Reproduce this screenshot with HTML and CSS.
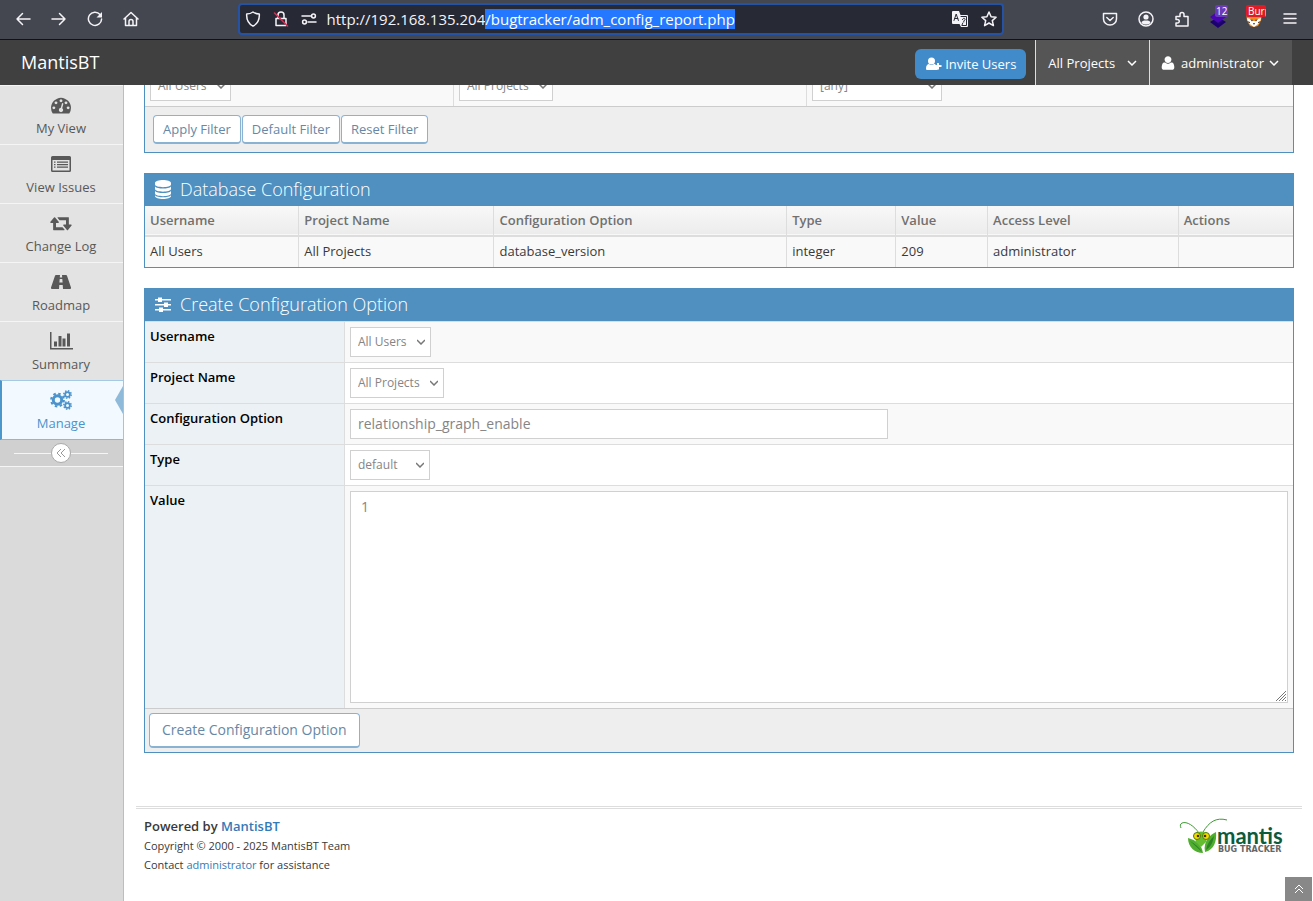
FILE: index.html
```html
<!DOCTYPE html>
<html lang="en">
<head>
    <meta charset="utf-8">
    <title>Configuration Report - MantisBT</title>
    <link rel="stylesheet" href="styles.css">
</head>
<body>
    <!-- Browser toolbar -->
    <div class="toolbar">
        <div class="toolbar-nav">
            <button class="tool" aria-label="Back"><svg width="16" height="16" viewBox="0 0 16 16"><path d="M15 8H2M7.500 2.500L2 8l5.500 5.500"/></svg></button>
            <button class="tool" aria-label="Forward"><svg width="16" height="16" viewBox="0 0 16 16"><path d="M1 8h13M8.500 2.500L14 8l-5.500 5.500"/></svg></button>
            <button class="tool" aria-label="Reload"><svg width="16" height="16" viewBox="0 0 16 16"><path d="M13 3.500A6.600 6.600 0 1 0 14.600 8"/><path class="solid" d="M15 1v5.500H9.500z"/></svg></button>
            <button class="tool" aria-label="Home"><svg width="16" height="16" viewBox="0 0 16 16"><path d="M1 8l7-6.500L15 8M2.500 7v7.500h11V7M6 14.500V10.500a2 2 0 0 1 4 0v4"/></svg></button>
        </div>
        <div class="urlbar">
            <svg width="16" height="16" viewBox="0 0 16 16"><path d="M8 1c2 1.500 4 2 6.300 2 .4 6-1.300 9.500-6.300 12.200C3 12.500 1.300 9 1.700 3 4 3 6 2.500 8 1z"/></svg>
            <svg width="16" height="16" viewBox="0 0 16 16"><path d="M3 7.500h10v7H3zM5 7.500V4a3 3 0 0 1 6 0v3.500"/><path class="strike" d="M1.500 2l13 13"/></svg>
            <svg width="16" height="16" viewBox="0 0 16 16"><path d="M1 5h9M7 11h8"/><circle cx="12.500" cy="5" r="1.900"/><circle cx="3.500" cy="11" r="1.900"/></svg>
            <input class="url" id="url" type="text" aria-label="Address" value="http://192.168.135.204/bugtracker/adm_config_report.php" spellcheck="false">
            <svg width="17" height="16" viewBox="0 0 17 16"><path class="solid" d="M1 0h6l1.500 4H15a1 1 0 0 1 1 1v10a1 1 0 0 1-1 1H9l-1.500-3H1a1 1 0 0 1-1-1V1a1 1 0 0 1 1-1z"/><path class="cut" d="M2 9.500L4.200 3l2.200 6.500M2.800 7.500h3M9 5.500h5.500v9H9.800l1-2.500M10.500 8.500c.5-2 3-1.500 2.500.2l-1.200 1.300v1"/></svg>
            <svg width="16" height="16" viewBox="0 0 16 16"><path d="M8 1l2.100 4.700 5 .5-3.800 3.400 1.100 5L8 12l-4.400 2.600 1.100-5L.9 6.200l5-.5z"/></svg>
        </div>
        <div class="toolbar-ext">
            <button class="tool" aria-label="Pocket"><svg width="16" height="16" viewBox="0 0 16 16"><path d="M1.500 2.500h13V8a6.500 6 0 0 1-13 0zM4.800 6.500L8 9.500l3.200-3"/></svg></button>
            <button class="tool" aria-label="Account"><svg width="16" height="16" viewBox="0 0 16 16"><circle cx="8" cy="8" r="7"/><circle class="solid" cx="8" cy="6" r="2.600"/><path class="solid" d="M3.500 12c0-2 2-2.500 4.500-2.500s4.500.5 4.500 2.500C10 14 6 14 3.500 12z"/></svg></button>
            <button class="tool" aria-label="Extensions"><svg width="16" height="16" viewBox="0 0 16 16"><path d="M2 5.500h4V3.500a2 2 0 0 1 4 0v2h4v9.500H2v-3h1.500a1.600 1.600 0 0 0 0-3.500H2z"/></svg></button>
            <button class="tool" aria-label="Layers"><svg width="18" height="18" viewBox="0 0 18 18"><path fill="#1d0070" d="M1 12l8-5 8 5-8 6z"/><path fill="#4806b4" d="M1 7l8-6 8 6-8 6z"/></svg><span class="count purple">12</span></button>
            <button class="tool" aria-label="Burp"><svg width="16" height="16" viewBox="0 0 16 16"><path fill="#f08a1c" d="M0 1l4 2h8l4-2-1 9-3 5-4 1-4-1-3-5z"/><path fill="#fff" d="M1 7l4 1 2 2h2l2-2 4-1-1 4-3 3-3 2-3-2-3-3z"/><path fill="#503018" d="M4 8l3 1-1 1.500zM12 8l-3 1 1 1.500zM7 12h2l-1 2zM1 10l3 1v1l-2-.5zM15 10l-3 1v1l2-.5z"/></svg><span class="count red">Burp</span></button>
            <button class="tool" aria-label="Menu"><svg width="14" height="16" viewBox="0 0 14 16"><path d="M1 3h12M1 7.500h12M1 12h12"/></svg></button>
        </div>
    </div>

    <!-- Navbar -->
    <header class="navbar">
        <a class="brand" href="#">MantisBT</a>
        <a class="invite" href="#"><svg width="16" height="14" viewBox="0 0 16 14"><circle cx="5.500" cy="4" r="3.500"/><path d="M0 11.500C0 8.500 1.500 7 3 7c1.500 1.200 3.500 1.200 5 0 1 0 1.500.5 2 1.200V10h1.500v3H1.500C.5 13 0 12.500 0 11.500zM11 6h2v2h2.500v2H13v2.500h-2V10H9V8h2z"/></svg>Invite Users</a>
        <a class="nav-item projects" href="#">All Projects<svg width="10" height="6" viewBox="0 0 10 6"><path d="M1 1l4 4 4-4"/></svg></a>
        <a class="nav-item account" href="#"><svg class="user" width="16" height="16" viewBox="0 0 1792 1792"><path d="M1600 1405q0 120-73 189.500t-194 69.500h-874q-121 0-194-69.500t-73-189.500q0-53 3.500-103.500t14-109 26.500-108.500 43-97.500 62-81 85.500-53.500 111.500-20q9 0 42 21.500t74.500 48 108 48 133.500 21.500 133.500-21.500 108-48 74.500-48 42-21.500q61 0 111.500 20t85.500 53.500 62 81 43 97.500 26.500 108.500 14 109 3.500 103.500zm-320-893q0 159-112.500 271.500t-271.500 112.500-271.500-112.500-112.500-271.500 112.500-271.500 271.500-112.500 271.500 112.500 112.500 271.500z"/></svg>administrator<svg width="10" height="6" viewBox="0 0 10 6"><path d="M1 1l4 4 4-4"/></svg></a>
    </header>

    <div class="main-container">
        <!-- Sidebar -->
        <nav class="sidebar">
            <ul class="nav-list">
                <li><a href="#"><svg width="20" height="20" viewBox="0 0 1792 1792"><path d="M384 1152q0-53-37.500-90.500t-90.500-37.500-90.500 37.500-37.500 90.500 37.500 90.500 90.500 37.500 90.500-37.500 37.500-90.500zm192-448q0-53-37.500-90.500t-90.500-37.500-90.500 37.500-37.500 90.500 37.500 90.500 90.500 37.500 90.500-37.500 37.500-90.500zm428 481l101-382q6-26-7.500-48.500t-38.500-29.500-48 6.500-30 39.500l-101 382q-60 5-107 43.500t-63 98.500q-20 77 20 146t117 89 146-20 89-117q16-60-6-117t-72-91zm660-33q0-53-37.500-90.500t-90.500-37.500-90.500 37.500-37.500 90.500 37.500 90.500 90.500 37.500 90.500-37.500 37.500-90.500zm-640-640q0-53-37.500-90.500t-90.500-37.500-90.500 37.500-37.500 90.500 37.500 90.500 90.500 37.500 90.500-37.500 37.500-90.500zm448 192q0-53-37.500-90.500t-90.500-37.500-90.500 37.500-37.500 90.500 37.500 90.500 90.500 37.500 90.500-37.500 37.500-90.500zm320 448q0 261-141 483-19 29-54 29h-1402q-35 0-54-29-141-221-141-483 0-182 71-348t191-286 286-191 348-71 348 71 286 191 191 286 71 348z"/></svg>My View</a></li>
                <li><a href="#"><svg width="20" height="20" viewBox="0 0 20 20"><path fill-rule="evenodd" d="M1.500 2h17A1.500 1.500 0 0 1 20 3.500v13a1.500 1.500 0 0 1-1.500 1.500h-17A1.500 1.500 0 0 1 0 16.500v-13A1.500 1.500 0 0 1 1.500 2zM1.500 6v10.500h17V6zM3 7.500h1.500v1.300H3zM6 7.500h11v1.300H6zM3 10h1.500v1.300H3zM6 10h11v1.300H6zM3 12.500h1.500v1.300H3zM6 12.500h11v1.300H6z"/></svg>View Issues</a></li>
                <li><a href="#"><svg width="22" height="20" viewBox="0 0 1920 1792"><path d="M1280 1504q0 13-9.500 22.500t-22.500 9.500h-960q-8 0-13.500-2t-9-7-5.500-8-3-11.500-1-11.500v-600h-192q-26 0-45-19t-19-45q0-24 15-41l320-384q19-22 49-22t49 22l320 384q15 17 15 41 0 26-19 45t-45 19h-192v384h576q16 0 25 11l160 192q7 10 7 21zm640-416q0 24-15 41l-320 384q-20 23-49 23t-49-23l-320-384q-15-17-15-41 0-26 19-45t45-19h192v-384h-576q-16 0-25-12l-160-192q-7-9-7-20 0-13 9.500-22.500t22.500-9.500h960q8 0 13.500 2t9 7 5.500 8 3 11.500 1 11.500v600h192q26 0 45 19t19 45z"/></svg>Change Log</a></li>
                <li><a href="#"><svg width="20" height="20" viewBox="0 0 20 20"><path fill-rule="evenodd" d="M5 3h4l-.2 2.500h2.400L11 3h4c.6 0 .8.200 1 .8l4 11.700c.3 1-.1 1.500-1 1.500h-7l-.3-4H8.300L8 17H1c-.9 0-1.300-.5-1-1.500L4 3.800c.2-.6.400-.8 1-.8zM8.700 7l-.3 3.500h3.200L11.300 7z"/></svg>Roadmap</a></li>
                <li><a href="#"><svg width="23" height="20" viewBox="0 0 23 20"><path d="M0 1h1.500v16H23v1.500H0zM4 10.500h3V15.500H4zM8.500 5h3v10.500h-3zM12.500 7.500h3v8h-3zM17 2.500h3v13h-3z"/></svg>Summary</a></li>
                <li class="active"><a href="#"><svg width="22" height="20" viewBox="0 0 22 20"><g class="gear"><circle cx="7.500" cy="10" r="4.200" stroke-width="3"/><circle cx="7.500" cy="10" r="6.400" stroke-width="2" stroke-dasharray="2.510 2.510"/><circle cx="17.500" cy="4.500" r="2.400" stroke-width="1.800"/><circle cx="17.500" cy="4.500" r="3.700" stroke-width="1.500" stroke-dasharray="1.450 1.450"/><circle cx="17.500" cy="15.500" r="2.400" stroke-width="1.800"/><circle cx="17.500" cy="15.500" r="3.700" stroke-width="1.500" stroke-dasharray="1.450 1.450"/></g></svg>Manage</a></li>
            </ul>
            <div class="sidebar-toggle">
                <button aria-label="Collapse sidebar"><svg width="10" height="10" viewBox="0 0 10 10"><path d="M5 1L1 5l4 4M9 1L5 5l4 4"/></svg></button>
            </div>
        </nav>

        <main class="content">
            <!-- Filter, scrolled under the navbar -->
            <form class="panel filter">
                <div class="filter-row">
                    <div class="filter-cell"><select class="w-user" aria-label="Username"><option>All Users</option></select></div>
                    <div class="filter-cell"><select class="w-project" aria-label="Project Name"><option>All Projects</option></select></div>
                    <div class="filter-cell"><select class="w-any" aria-label="Configuration Option"><option>[any]</option></select></div>
                </div>
                <div class="toolbox small">
                    <button type="button">Apply Filter</button>
                    <button type="button">Default Filter</button>
                    <button type="button">Reset Filter</button>
                </div>
            </form>

            <!-- Database configuration -->
            <section class="panel">
                <h4><svg width="18" height="20" viewBox="0 0 18 20"><path d="M1 4c0-4 16-4 16 0v1.500c0 3.500-16 3.500-16 0zM1 7.500c2 2.700 14 2.700 16 0V10c0 3.500-16 3.500-16 0zM1 12c2 2.700 14 2.700 16 0v2.500c0 3.500-16 3.500-16 0zM1 16.300c2 2.700 14 2.700 16 0v.7c0 4-16 4-16 0z"/></svg>Database Configuration</h4>
                <table class="config-table">
                    <thead>
                        <tr><th class="col-user">Username</th><th class="col-project">Project Name</th><th class="col-option">Configuration Option</th><th class="col-type">Type</th><th class="col-value">Value</th><th class="col-access">Access Level</th><th>Actions</th></tr>
                    </thead>
                    <tbody>
                        <tr><td>All Users</td><td>All Projects</td><td>database_version</td><td>integer</td><td>209</td><td>administrator</td><td></td></tr>
                    </tbody>
                </table>
            </section>

            <!-- Create option form -->
            <form class="panel">
                <h4><svg width="18" height="20" viewBox="0 0 18 20"><path d="M1 5h16v1.500H1zM1 10h16v1.500H1zM1 15h16v1.500H1zM4 3.500h4V8H4zM10 8.500h4V13h-4zM5 13.500h4V18H5z"/></svg>Create Configuration Option</h4>
                <div class="form-row">
                    <label for="username">Username</label>
                    <div class="field"><select class="w-user" id="username"><option>All Users</option></select></div>
                </div>
                <div class="form-row">
                    <label for="project">Project Name</label>
                    <div class="field"><select class="w-project" id="project"><option>All Projects</option></select></div>
                </div>
                <div class="form-row">
                    <label for="option">Configuration Option</label>
                    <div class="field"><input id="option" type="text" value="relationship_graph_enable"></div>
                </div>
                <div class="form-row">
                    <label for="type">Type</label>
                    <div class="field"><select class="w-type" id="type"><option>default</option></select></div>
                </div>
                <div class="form-row">
                    <label for="value">Value</label>
                    <div class="field"><textarea id="value">1</textarea></div>
                </div>
                <div class="toolbox">
                    <button type="button">Create Configuration Option</button>
                </div>
            </form>

            <footer class="footer">
                <div class="footer-text">
                    <p class="powered">Powered by <a href="#">MantisBT</a></p>
                    <p>Copyright &copy; 2000 - 2025 MantisBT Team</p>
                    <p>Contact <a href="#">administrator</a> for assistance</p>
                </div>
                <svg class="logo" width="106" height="40" viewBox="0 0 106 40" role="img" aria-label="Mantis Bug Tracker">
                    <path class="antenna" d="M21 16C16 9 9 4 4 6c-2 1-2 3-1 5M25 15C31 5 38 0 49 3"/>
                    <path fill="#4fae2e" d="M10 21c8 2 14 7 15 15-8 0-15-6-15-15zM38 15c-6 3-13 9-11 20 9-2 12-11 11-20z"/>
                    <path fill="#2c8425" d="M12 24c5 3 9 6 12 11M36 19c-4 4-7 8-8 14 5-3 7-8 8-14z"/>
                    <path fill="#65bd32" d="M16 17q7-5 14 0l-2 8-5 5-5-5z"/>
                    <circle fill="#f6d800" stroke="#4a7c10" cx="19" cy="19" r="3.500"/><circle fill="#f6d800" stroke="#4a7c10" cx="28" cy="19" r="3.500"/>
                    <circle fill="#403000" cx="20" cy="19" r="1.300"/><circle fill="#403000" cx="27" cy="19" r="1.300"/>
                    <text class="logo-name" x="39" y="27">mantis</text>
                    <text class="logo-sub" x="40" y="35">BUG TRACKER</text>
                </svg>
            </footer>
        </main>
    </div>

    <a class="scroll-up" href="#" aria-label="Scroll to top"><svg width="10" height="10" viewBox="0 0 10 10"><path d="M1 5l4-4 4 4M1 9l4-4 4 4"/></svg></a>

    <script>
        // Select the path part of the address
        const url = document.getElementById('url');
        url.focus();
        url.setSelectionRange(url.value.indexOf('/bugtracker'), url.value.length);
    </script>
</body>
</html>
```
FILE: styles.css
```css
* {
    box-sizing: border-box;
}

body {
    display: flex;
    flex-direction: column;
    height: 100vh;
    margin: 0;
    overflow: hidden;
    background-color: #fff;
    color: #393939;
    font-family: "Open Sans", sans-serif;
    font-size: 13px;
    line-height: 20px;
}

a {
    color: #337ab7;
    text-decoration: none;
}

svg {
    flex: none;
    fill: currentColor;
}

button, input, select, textarea {
    font-family: inherit;
}

/* Browser toolbar */
.toolbar {
    display: flex;
    align-items: center;
    justify-content: space-between;
    flex: none;
    height: 40px;
    padding: 0 15px 1px;
    background-color: #44474f;
    border-bottom: 1px solid #111218;
    color: #f4f4f8;
}

.toolbar svg {
    fill: none;
    stroke: currentColor;
    stroke-width: 1.5;
    stroke-linecap: round;
    stroke-linejoin: round;
}

.toolbar .solid {
    fill: currentColor;
    stroke: none;
}

.toolbar .strike {
    stroke: #e22850;
}

.toolbar .cut {
    stroke: #272935;
    stroke-width: 1;
}

.toolbar-nav, .toolbar-ext {
    display: flex;
    gap: 20px;
}

.tool {
    display: flex;
    position: relative;
    align-items: center;
    justify-content: center;
    width: 16px;
    height: 20px;
    padding: 0;
    background: none;
    border: none;
    color: inherit;
}

.tool svg path[fill] {
    stroke: none;
}

/* Counter over an extension icon */
.count {
    position: absolute;
    top: -4px;
    left: 5px;
    padding: 0 1px;
    border-radius: 2px;
    color: #fff;
    font-size: 10px;
    line-height: 12px;
}

.purple {
    background-color: #6a3ab8;
}

.red {
    left: 0;
    max-width: 20px;
    padding: 0 0 0 2px;
    overflow: hidden;
    background-color: #e01b24;
}

.urlbar {
    display: flex;
    align-items: center;
    flex: 0 1 766px;
    gap: 12px;
    height: 32px;
    padding: 0 5px;
    background-color: #272935;
    border: 2px solid #2552a4;
    border-radius: 4px;
}

.url {
    flex: 1;
    min-width: 0;
    height: 20px;
    margin-left: -2px;
    padding: 0;
    background: none;
    border: none;
    outline: none;
    color: #f4f4f8;
    font-size: 15px;
    line-height: 20px;
}

.url::selection {
    background-color: #2478ff;
    color: #fff;
}

/* Navbar */
.navbar {
    display: flex;
    align-items: center;
    flex: none;
    height: 45px;
    padding: 0 21px;
    background-color: #404040;
}

.navbar a {
    color: #fff;
}

.navbar .brand {
    margin-right: auto;
    padding-bottom: 1px;
    font-size: 18px;
}

.invite {
    display: flex;
    align-items: center;
    gap: 3px;
    height: 30px;
    margin: 3px 9px 0 0;
    padding: 0 10px 0 11px;
    background-color: #428bca;
    border-radius: 6px;
}

.nav-item {
    display: flex;
    align-items: center;
    height: 45px;
    padding: 0 12px;
    background-color: #555;
    border-left: 1px solid #ddd;
}

.nav-item svg {
    fill: none;
    stroke: currentColor;
    stroke-width: 1.5;
}

.nav-item .user {
    fill: currentColor;
    stroke: none;
}

.projects {
    gap: 12px;
}

.account {
    gap: 5px;
    padding: 0 13px 0 10px;
}

/* Sidebar */
.main-container {
    display: flex;
    flex: 1;
    min-height: 0;
}

.sidebar {
    flex: none;
    width: 124px;
    background-color: #dadada;
    border-right: 1px solid #a5c3d9;
}

.nav-list {
    margin: 0;
    padding: 0;
    list-style: none;
}

.nav-list a {
    display: flex;
    flex-direction: column;
    align-items: center;
    gap: 3px;
    height: 59px;
    padding: 9px 1px 0 0;
    background-color: #e3e3e3;
    border-top: 1px solid #f5f5f5;
    color: #585858;
}

.nav-list .active {
    position: relative;
}

.nav-list .active a {
    height: 60px;
    padding-right: 3px;
    background-color: #f2f9ff;
    border-top: 1px solid #a5c8e4;
    border-bottom: 1px solid #8cb8d8;
    border-left: 2px solid #4b96cb;
    color: #4b93cc;
}

/* Arrow pointing into the active item */
.nav-list .active::after {
    content: "";
    position: absolute;
    top: 6px;
    right: 0;
    border: 14px solid transparent;
    border-right: 8px solid #8fbada;
    border-left: none;
}

.gear circle {
    fill: none;
    stroke: currentColor;
}

.sidebar-toggle {
    display: flex;
    align-items: center;
    height: 27px;
    padding: 0 15px 0 14px;
    background-color: #d0d0d0;
    border-bottom: 1px solid #f5f5f5;
}

.sidebar-toggle::before, .sidebar-toggle::after {
    content: "";
    flex: 1;
    height: 1px;
    background-color: #f5f5f5;
}

.sidebar-toggle button {
    display: flex;
    align-items: center;
    justify-content: center;
    width: 20px;
    height: 20px;
    padding: 0;
    background-color: #fff;
    border: 1px solid #aaa;
    border-radius: 50%;
    color: #999;
}

.sidebar-toggle svg, .scroll-up svg {
    fill: none;
    stroke: currentColor;
}

/* Content */
.content {
    display: flex;
    flex-direction: column;
    flex: 1;
    gap: 20px;
    min-width: 0;
    padding: 0 19px 0 20px;
}

.panel {
    border: 1px solid #4f90c1;
}

.panel h4 {
    display: flex;
    align-items: center;
    gap: 8px;
    height: 32px;
    margin: 0;
    padding: 0 9px 2px;
    background-color: #4f90c1;
    color: #fff;
    font-size: 18px;
    font-weight: 300;
}

.filter {
    border-top: none;
}

.filter-row {
    display: grid;
    grid-template-columns: 309fr 353fr 486fr;
    height: 21px;
    background-color: #f9f9f9;
    overflow: hidden;
}

.filter-cell {
    display: flex;
    align-items: flex-end;
    height: 21px;
    padding: 5px;
    border-right: 1px solid #ddd;
}

.filter-cell:last-child {
    border-right: none;
}

.toolbox {
    padding: 4px;
    background-color: #eee;
    border-top: 1px solid #ccc;
}

.toolbox button {
    display: block;
    height: 35px;
    padding: 0 12px 2px;
    background-color: #fff;
    border: 1px solid #8ab2d3;
    border-bottom-width: 2px;
    border-radius: 4px;
    color: #6688a6;
    font-size: 14px;
}

.toolbox.small {
    display: flex;
    gap: 1px;
    padding: 8px;
}

.small button {
    height: 29px;
    padding: 0 9px;
    font-size: 13px;
}

/* Table */
.config-table {
    width: 100%;
    border-collapse: collapse;
    table-layout: fixed;
}

.config-table th, .config-table td {
    height: 31px;
    padding: 0 5px 2px;
    border-right: 1px solid #ddd;
    text-align: left;
}

.config-table th {
    height: 30px;
}

.config-table th:last-child, .config-table td:last-child {
    border-right: none;
}

.config-table thead tr {
    background-image: linear-gradient(#f8f8f8, #ececec);
    border-bottom: 2px solid #ddd;
    color: #707070;
}

.config-table th, .form-row label, .powered {
    font-weight: 600;
}

.config-table tbody {
    background-color: #f9f9f9;
}

.col-user {
    width: 13.4%;
}

.col-project {
    width: 17%;
}

.col-option {
    width: 25.5%;
}

.col-type {
    width: 9.5%;
}

.col-value {
    width: 8%;
}

.col-access {
    width: 16.6%;
}

/* Form */
.form-row {
    display: flex;
    border-top: 1px solid #ddd;
}

.form-row:nth-of-type(odd) {
    background-color: #f9f9f9;
}

.form-row label {
    flex: none;
    width: 200px;
    padding: 4px 5px;
    background-color: #ecf1f5;
    border-right: 1px solid #ddd;
    color: #000;
}

.field {
    display: flex;
    flex: 1;
    padding: 5px;
}

select, .field input, .field textarea {
    background-color: #fff;
    border: 1px solid #d0d0d0;
    border-radius: 0;
    color: #858585;
}

select {
    flex: none;
    height: 30px;
    padding: 0 7px 2px;
    appearance: none;
    background-image: url("data:image/svg+xml,%3Csvg xmlns='http://www.w3.org/2000/svg' width='8' height='6' viewBox='0 0 8 6'%3E%3Cpath d='M0 1l4 4 4-4' fill='none' stroke='%23777' stroke-width='1.500'/%3E%3C/svg%3E");
    background-repeat: no-repeat;
    background-position: right 5px center;
    font-size: 12px;
}

.w-user {
    width: 81px;
}

.w-project {
    width: 94px;
}

.w-any {
    width: 130px;
}

.w-type {
    width: 80px;
}

.field input {
    width: 538px;
    height: 30px;
    padding: 0 7px 2px;
    font-size: 14px;
}

.field textarea {
    width: 100%;
    height: 212px;
    padding: 5px 10px;
    font-size: 14px;
    line-height: 20px;
}

.field textarea::-webkit-resizer {
    background-image: url("data:image/svg+xml,%3Csvg xmlns='http://www.w3.org/2000/svg' width='12' height='12' viewBox='0 0 12 12'%3E%3Cpath d='M1 11L11 1M4 11l7-7M7 11l4-4M10 11l1-1' stroke='%23777'/%3E%3C/svg%3E");
    background-repeat: no-repeat;
    background-position: right bottom;
}

/* Footer */
.footer {
    display: flex;
    justify-content: space-between;
    margin: 33px -8px 0;
    padding: 7px 18px 0 8px;
    border-top: 3px double #ddd;
}

.footer-text p {
    margin: 0;
    font-size: 11px;
    line-height: 19px;
}

.footer-text .powered {
    font-size: 13px;
    line-height: 20px;
}

.logo {
    margin-top: 1px;
}

.antenna {
    fill: none;
    stroke: #3f9a35;
}

.logo-name {
    fill: #0a5c3c;
    font-family: Lato, sans-serif;
    font-size: 22px;
    font-weight: 700;
}

.logo-sub {
    fill: #666;
    font-family: "DejaVu Sans", sans-serif;
    font-size: 8px;
    font-weight: 700;
}

.scroll-up {
    display: flex;
    position: fixed;
    right: 1px;
    bottom: 0;
    align-items: center;
    justify-content: center;
    width: 27px;
    height: 24px;
    background-color: #888;
    color: #fff;
}
```
